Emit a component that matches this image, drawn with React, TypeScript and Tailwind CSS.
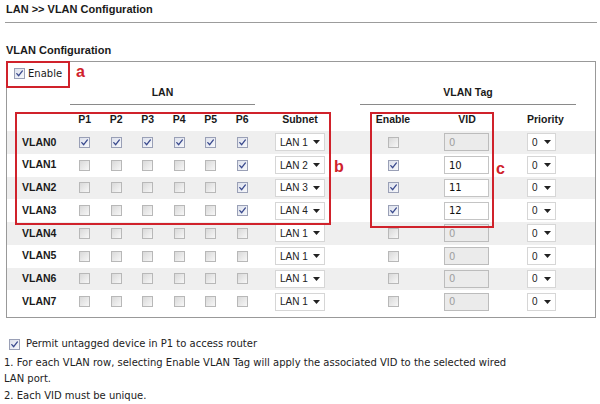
import React from "react";

// VLAN Configuration page — router web UI with red annotation boxes

type Row = {
  name: string;
  ports: boolean[];
  subnet: string;
  tag: boolean;
  vid: string;
};

const rows: Row[] = [
  { name: "VLAN0", ports: [true, true, true, true, true, true], subnet: "LAN 1", tag: false, vid: "0" },
  { name: "VLAN1", ports: [false, false, false, false, false, true], subnet: "LAN 2", tag: true, vid: "10" },
  { name: "VLAN2", ports: [false, false, false, false, false, true], subnet: "LAN 3", tag: true, vid: "11" },
  { name: "VLAN3", ports: [false, false, false, false, false, true], subnet: "LAN 4", tag: true, vid: "12" },
  { name: "VLAN4", ports: [false, false, false, false, false, false], subnet: "LAN 1", tag: false, vid: "0" },
  { name: "VLAN5", ports: [false, false, false, false, false, false], subnet: "LAN 1", tag: false, vid: "0" },
  { name: "VLAN6", ports: [false, false, false, false, false, false], subnet: "LAN 1", tag: false, vid: "0" },
  { name: "VLAN7", ports: [false, false, false, false, false, false], subnet: "LAN 1", tag: false, vid: "0" },
];

const gridCols = "grid grid-cols-[62px_repeat(6,31.5px)_84px_102px_78px_1fr]";

function Check({ on }: { on?: boolean }) {
  return (
    <span
      className={`inline-flex items-center justify-center w-[11px] h-[11px] border ${
        on
          ? "border-[#9aa0b6] bg-linear-to-br from-[#dde1ec] to-[#f7f8fb]"
          : "border-[#b8b8b8] bg-linear-to-br from-[#d9d9d9] to-[#f7f7f7]"
      }`}
    >
      {on && (
        <svg width="9" height="9" viewBox="0 0 9 9" fill="none">
          <path d="M1.8 4.6 L3.7 6.7 L7.4 1.9" stroke="#3a4a8e" strokeWidth="1.3" strokeLinecap="round" strokeLinejoin="round" />
        </svg>
      )}
    </span>
  );
}

function Arrow() {
  return (
    <svg width="7" height="4" viewBox="0 0 7 4" className="shrink-0">
      <path d="M0 0 L7 0 L3.5 4 Z" fill="#222" />
    </svg>
  );
}

function Select({ value, w }: { value: string; w: string }) {
  return (
    <div className={`flex items-center h-[18px] ${w} border border-[#d6d6d6] bg-white pl-[4px] pr-[4px] text-[10px] text-[#222]`}>
      <span>{value}</span>
      <span className="ml-auto">
        <Arrow />
      </span>
    </div>
  );
}

export default function App() {
  return (
    <div className="relative w-[600px] h-[404px] bg-white overflow-hidden font-['Liberation_Sans',Arial,sans-serif] text-[#1a1a1a]">
      {/* Page title */}
      <div className="pl-[6px] pt-[2px] h-[22px] text-[11px] font-bold leading-[14px]">LAN &gt;&gt; VLAN Configuration</div>
      <div className="ml-[5px] w-[592px] h-px bg-[#9c9c9c]" />

      <div className="pl-[6px] mt-[20px] text-[11px] font-bold leading-[14px]">VLAN Configuration</div>

      {/* Main box */}
      <div className="ml-[6px] mt-[4px] w-[590px] h-[257px] border border-[#999]">
        {/* Enable row */}
        <div className="flex items-center h-[22px] pl-[7px] gap-[3px] font-['DejaVu_Sans',Verdana,sans-serif] text-[10px]">
          <Check on />
          <span>Enable</span>
        </div>

        {/* Group headers */}
        <div className="flex h-[21px] text-[10.5px] font-bold">
          <div className="w-[63px]" />
          <div className="w-[185px] border-b border-[#8a8a8a] text-center leading-[14px] pt-[1px]">LAN</div>
          <div className="w-[105px]" />
          <div className="w-[216px] border-b border-[#8a8a8a] text-center leading-[14px] pt-[1px]">VLAN Tag</div>
        </div>

        {/* Column headers */}
        <div className={`${gridCols} h-[26px] pt-[7px] text-[10.5px] font-bold leading-[14px]`}>
          <div />
          {["P1", "P2", "P3", "P4", "P5", "P6"].map((p) => (
            <div key={p} className="text-center">{p}</div>
          ))}
          <div className="pl-[17px]">
            <div className="w-[50px] text-center">Subnet</div>
          </div>
          <div className="text-center">Enable</div>
          <div>
            <div className="w-[46px] text-center">VID</div>
          </div>
          <div className="pl-[5px]">
            <div className="w-[28px] text-center">Priority</div>
          </div>
        </div>

        {/* Rows */}
        {rows.map((r, i) => (
          <div
            key={r.name}
            className={`${gridCols} h-[22.75px] items-center ${i % 2 === 0 ? "bg-[#efefef]" : "bg-white"}`}
          >
            <div className="pl-[15px] text-[10.5px] font-bold">{r.name}</div>
            {r.ports.map((on, j) => (
              <div key={j} className="flex justify-center">
                <Check on={on} />
              </div>
            ))}
            <div className="pl-[17px]">
              <Select value={r.subnet} w="w-[50px]" />
            </div>
            <div className="flex justify-center">
              <Check on={r.tag} />
            </div>
            <div>
              <div
                className={`flex items-center h-[18px] w-[45px] border pl-[4px] font-['DejaVu_Sans',Verdana,sans-serif] text-[10px] ${
                  r.tag ? "bg-white border-[#c4c4c4] text-[#111]" : "bg-[#ebebeb] border-[#bcbcbc] text-[#a0a0a0]"
                }`}
              >
                {r.vid}
              </div>
            </div>
            <div className="pl-[5px]">
              <Select value="0" w="w-[29px]" />
            </div>
          </div>
        ))}
      </div>

      {/* Notes */}
      <div className="mt-[18px] font-['DejaVu_Sans',Verdana,sans-serif] text-[10px] leading-[16px] text-[#222]">
        <div className="flex items-center gap-[6px] pl-[9px]">
          <Check on />
          <span>Permit untagged device in P1 to access router</span>
        </div>
        <div className="pl-[4px] mt-[3px] whitespace-nowrap">
          1. For each VLAN row, selecting Enable VLAN Tag will apply the associated VID to the selected wired
          <br />
          LAN port.
        </div>
        <div className="pl-[4px] mt-[1px]">2. Each VID must be unique.</div>
      </div>

      {/* Annotations */}
      <div className="absolute left-[6px] top-[61px] w-[64px] h-[27px] border-2 border-[#d0222b]" />
      <div className="absolute left-[76px] top-[62px] text-[16px] font-bold leading-[20px] text-[#d0222b]">a</div>
      <div className="absolute left-[15px] top-[112px] w-[316px] h-[113px] border-2 border-[#d0222b]" />
      <div className="absolute left-[334px] top-[157px] text-[16px] font-bold leading-[20px] text-[#d0222b]">b</div>
      <div className="absolute left-[370px] top-[112px] w-[124px] h-[116px] border-2 border-[#d0222b]" />
      <div className="absolute left-[496px] top-[159px] text-[16px] font-bold leading-[20px] text-[#d0222b]">c</div>
    </div>
  );
}
